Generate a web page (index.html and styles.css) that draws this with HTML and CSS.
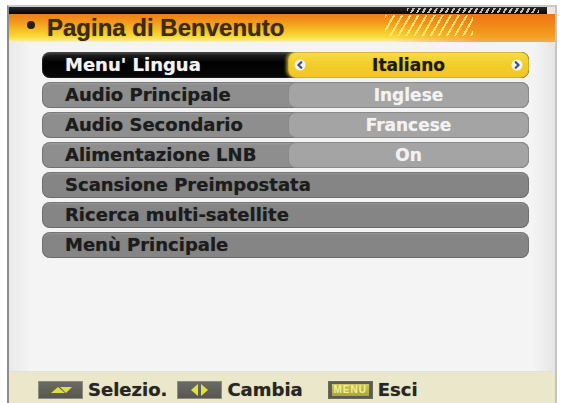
FILE: index.html
```html
<!DOCTYPE html>
<html lang="it">
<head>
<meta charset="utf-8">
<title>Pagina di Benvenuto</title>
<link rel="stylesheet" href="styles.css">
</head>
<body>
<div class="screen">
  <div class="header">
    <div class="topbar"></div>
    <div class="titlebar">
      <span class="bullet"></span>
      <span class="title">Pagina di Benvenuto</span>
    </div>
  </div>
  <div class="content">
    <div class="row row-active">
      <div class="label">Menu' Lingua</div>
      <div class="value value-active">
        <span class="arrow"><svg viewBox="0 0 12 12" width="12" height="12"><circle cx="6" cy="6" r="5.5" fill="#f4f4f0"/><path d="M7.3 3.2 L4.4 6 L7.3 8.8" fill="none" stroke="#3d4f86" stroke-width="2.2" stroke-linecap="round" stroke-linejoin="round"/></svg></span>
        <span class="value-text">Italiano</span>
        <span class="arrow"><svg viewBox="0 0 12 12" width="12" height="12"><circle cx="6" cy="6" r="5.5" fill="#f4f4f0"/><path d="M4.7 3.2 L7.6 6 L4.7 8.8" fill="none" stroke="#3d4f86" stroke-width="2.2" stroke-linecap="round" stroke-linejoin="round"/></svg></span>
      </div>
    </div>
    <div class="row">
      <div class="label">Audio Principale</div>
      <div class="value"><span class="value-text">Inglese</span></div>
    </div>
    <div class="row">
      <div class="label">Audio Secondario</div>
      <div class="value"><span class="value-text">Francese</span></div>
    </div>
    <div class="row">
      <div class="label">Alimentazione LNB</div>
      <div class="value"><span class="value-text">On</span></div>
    </div>
    <div class="row row-full">
      <div class="label">Scansione Preimpostata</div>
    </div>
    <div class="row row-full">
      <div class="label">Ricerca multi-satellite</div>
    </div>
    <div class="row row-full">
      <div class="label">Menù Principale</div>
    </div>
  </div>
  <div class="footer">
    <span class="key"><svg viewBox="0 0 45 18" width="45" height="18"><polygon points="13,12 20,6 27,12" fill="#dede3c"/><polygon points="22,6 34,6 28,12" fill="#dede3c"/></svg></span>
    <span class="hint">Selezio.</span>
    <span class="key key-gap"><svg viewBox="0 0 45 18" width="45" height="18"><polygon points="21,3 21,15 14,9" fill="#e2e23e"/><polygon points="24,3 24,15 31,9" fill="#e2e23e"/></svg></span>
    <span class="hint">Cambia</span>
    <span class="key key-menu key-gap2"><span class="menu-label">MENU</span></span>
    <span class="hint">Esci</span>
  </div>
</div>
</body>
</html>
```

FILE: styles.css
```css
html, body {
  margin: 0;
  padding: 0;
  background: #ffffff;
}

body {
  width: 565px;
  height: 403px;
  overflow: hidden;
  font-family: "DejaVu Sans", "Liberation Sans", sans-serif;
}

.screen {
  margin: 5px 0 0 7px;
  width: 546px;
  height: 396px;
  border-left: 2px solid #8c8c8c;
  border-right: 2px solid #c4c4c4;
  border-top: 2px solid #c8c8c8;
  display: flex;
  flex-direction: column;
  background: #f2f2f2;
}

.header {
  display: flex;
  flex-direction: column;
  background: #e8e8e8;
}

.topbar {
  height: 7px;
  margin-right: 8px;
  background:
    repeating-linear-gradient(120deg, #bdbdbd 0 2px, rgba(0,0,0,0) 2px 5px) 398px 1px / 132px 5px no-repeat,
    linear-gradient(#2a2a2a, #050505);
}

.titlebar {
  height: 28px;
  display: flex;
  align-items: center;
  background:
    repeating-linear-gradient(120deg, rgba(255, 236, 120, 0.9) 0 2px, rgba(0,0,0,0) 2px 7px) 376px 1px / 88px 21px no-repeat,
    linear-gradient(90deg, rgba(240, 120, 20, 0) 0, rgba(240, 120, 20, 0) 380px, rgba(238, 112, 18, 0.55) 470px, rgba(238, 112, 18, 0.55) 100%),
    linear-gradient(#ee7c16 0, #f29a1c 30%, #f6c428 62%, #f8dc3a 82%, #faf0b8 100%);
}

.bullet {
  width: 8px;
  height: 8px;
  border-radius: 50%;
  background: #2c1d0e;
  margin: 0 12px 6px 18px;
  flex: none;
}

.title {
  font-family: "Liberation Sans", Arial, sans-serif;
  font-weight: bold;
  font-size: 24px;
  line-height: 28px;
  color: #3e2a10;
  text-shadow: 0 0 1px rgba(62, 42, 16, 0.6);
}

.content {
  flex: 1;
  padding: 10px 26px 0 33px;
  display: flex;
  flex-direction: column;
  gap: 4px;
  background: linear-gradient(90deg, #e9e9e9 0, #f4f4f4 4%, #f4f4f4 96%, #e6e6e6 100%);
}

.row {
  height: 26px;
  border-radius: 8px;
  display: flex;
  background: #8e8e8e;
  box-shadow: inset 0 0 0 1px rgba(60, 60, 60, 0.35), inset 0 2px 2px rgba(255, 255, 255, 0.15);
  overflow: hidden;
}

.label {
  width: 223px;
  flex: none;
  padding-left: 23px;
  font-weight: bold;
  font-size: 18px;
  line-height: 26px;
  color: #1c1c1c;
  white-space: nowrap;
  text-shadow: 0 0 1px rgba(0, 0, 0, 0.4);
}

.value {
  flex: 1;
  border-radius: 8px;
  background: #a4a4a4;
  box-shadow: inset 0 0 0 1px rgba(80, 80, 80, 0.3);
  display: flex;
  align-items: center;
  justify-content: center;
  font-weight: bold;
  font-size: 17px;
  color: #f2f2f2;
  text-shadow: 0 0 1px rgba(255, 255, 255, 0.5);
}

.row-active {
  background: linear-gradient(#2a2a2a, #000000 40%, #0a0a0a);
}

.row-active .label {
  color: #f2f2f2;
  text-shadow: 0 0 1px rgba(255, 255, 255, 0.5);
}

.value-active {
  background: linear-gradient(#f6dc4c, #f2ce2a 45%, #efc622);
  box-shadow: inset 0 0 0 1px rgba(190, 150, 20, 0.5), -2px 0 3px rgba(250, 220, 80, 0.6);
  color: #1c1a10;
  text-shadow: 0 0 1px rgba(0, 0, 0, 0.4);
  justify-content: space-between;
  padding: 0 6px;
}

.value-active .value-text {
  flex: 1;
  text-align: center;
}

.arrow {
  width: 12px;
  height: 12px;
  display: flex;
  flex: none;
}

.row-full {
  background: #858585;
}

.row-full .label {
  width: auto;
}

.footer {
  height: 32px;
  border-top: 1px solid #e2e2dc;
  background: #ebe7ca;
  display: flex;
  align-items: flex-start;
  padding: 9px 0 0 29px;
  box-sizing: border-box;
}

.key {
  width: 45px;
  height: 18px;
  flex: none;
  display: flex;
  background: linear-gradient(#6c6c66, #56564f);
  box-shadow: inset 0 0 0 1px #8d8d84;
}

.key-gap {
  margin-left: 10px;
}

.key-gap2 {
  margin-left: 25px;
}

.key-menu {
  align-items: center;
  justify-content: center;
  box-shadow: inset 0 0 0 1px #6a6a60, inset 0 0 0 3px #5c5c52;
}

.menu-label {
  width: 37px;
  height: 12px;
  background: linear-gradient(#cfc856, #a9a43c);
  color: #f2ee96;
  font-family: "Liberation Sans", Arial, sans-serif;
  font-weight: bold;
  font-size: 10px;
  line-height: 12px;
  text-align: center;
  letter-spacing: 1px;
}

.hint {
  margin-left: 5px;
  font-weight: bold;
  font-size: 18px;
  line-height: 18px;
  color: #262624;
  text-shadow: 0 0 1px rgba(0, 0, 0, 0.4);
}
```
